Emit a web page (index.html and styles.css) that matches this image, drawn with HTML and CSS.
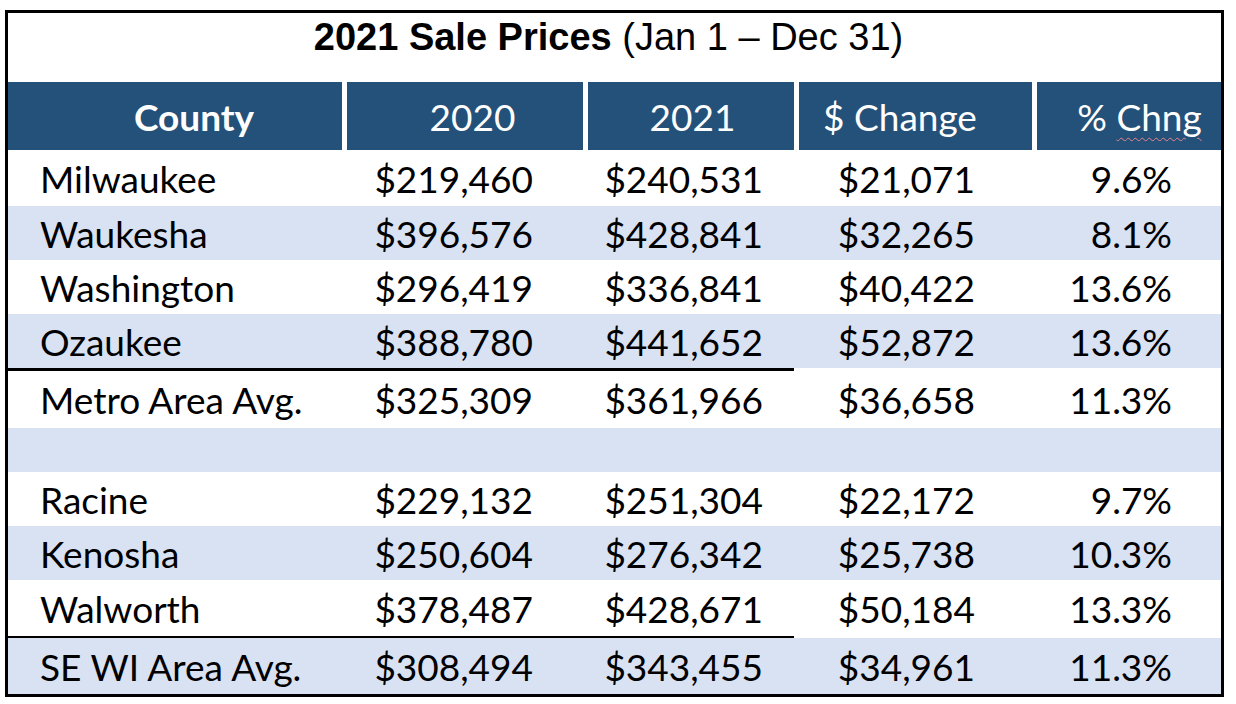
FILE: index.html
```html
<!DOCTYPE html>
<html lang="en">
<head>
<meta charset="utf-8">
<title>2021 Sale Prices</title>
<link rel="stylesheet" href="styles.css">
</head>
<body>
<div class="sheet">
  <div class="title"><b>2021 Sale Prices</b> (Jan 1 – Dec 31)</div>
  <div class="row head">
    <div class="th th1"><b>County</b></div>
    <div class="th th2">2020</div>
    <div class="th th3">2021</div>
    <div class="th th4">$ Change</div>
    <div class="th th5"><span>% <span class="spell">Chng</span></span></div>
  </div>
  <div class="row r56">
    <div class="c c1">Milwaukee</div><div class="c c2">$219,460</div><div class="c c3">$240,531</div><div class="c c4">$21,071</div><div class="c c5">9.6%</div>
  </div>
  <div class="row band">
    <div class="c c1">Waukesha</div><div class="c c2">$396,576</div><div class="c c3">$428,841</div><div class="c c4">$32,265</div><div class="c c5">8.1%</div>
  </div>
  <div class="row">
    <div class="c c1">Washington</div><div class="c c2">$296,419</div><div class="c c3">$336,841</div><div class="c c4">$40,422</div><div class="c c5">13.6%</div>
  </div>
  <div class="row band rule r57">
    <div class="c c1">Ozaukee</div><div class="c c2">$388,780</div><div class="c c3">$441,652</div><div class="c c4">$52,872</div><div class="c c5">13.6%</div>
  </div>
  <div class="row r57">
    <div class="c c1">Metro Area Avg.</div><div class="c c2">$325,309</div><div class="c c3">$361,966</div><div class="c c4">$36,658</div><div class="c c5">11.3%</div>
  </div>
  <div class="row band blank">
    <div class="c c1"></div><div class="c c2"></div><div class="c c3"></div><div class="c c4"></div><div class="c c5"></div>
  </div>
  <div class="row">
    <div class="c c1">Racine</div><div class="c c2">$229,132</div><div class="c c3">$251,304</div><div class="c c4">$22,172</div><div class="c c5">9.7%</div>
  </div>
  <div class="row band">
    <div class="c c1">Kenosha</div><div class="c c2">$250,604</div><div class="c c3">$276,342</div><div class="c c4">$25,738</div><div class="c c5">10.3%</div>
  </div>
  <div class="row rule r58">
    <div class="c c1">Walworth</div><div class="c c2">$378,487</div><div class="c c3">$428,671</div><div class="c c4">$50,184</div><div class="c c5">13.3%</div>
  </div>
  <div class="row band r56">
    <div class="c c1">SE WI Area Avg.</div><div class="c c2">$308,494</div><div class="c c3">$343,455</div><div class="c c4">$34,961</div><div class="c c5">11.3%</div>
  </div>
</div>
</body>
</html>
```
FILE: styles.css
```css
* { box-sizing: border-box; }
html, body { margin: 0; padding: 0; background: #fff; }

.sheet {
  margin: 10px 0 0 5px;
  width: 1219px;
  border: 3px solid #000;
  background: #fff;
  color: #000;
}

.title {
  height: 69px;
  padding-top: 5px;
  padding-right: 12px;
  text-align: center;
  font-family: "Liberation Sans", Arial, sans-serif;
  font-size: 38px;
  line-height: 38px;
}
.title b { font-weight: 700; }

.row {
  display: grid;
  grid-template-columns: 334px 241px 211px 238px 189px;
  height: 54px;
  font-family: Lato, "Noto Sans", sans-serif;
  font-size: 37px;
}
.row.r56 { height: 56px; }
.row.r57 { height: 57px; }
.row.r58 { height: 58px; }
.row.blank { height: 44px; }

.head { height: 68px; }
.th {
  background: #245179;
  color: #fff;
  display: flex;
  align-items: center;
  justify-content: center;
}
.th + .th { border-left: 5px solid #fff; }
.th1 { padding-left: 38px; }
.th1 b { font-weight: 700; }
.th2 { padding-left: 15px; }
.th3 { padding-left: 3px; }
.th4 { padding-right: 31px; }
.th5 { padding-left: 21px; }
.spell {
  text-decoration: underline wavy #e8858a;
  text-decoration-thickness: 1px;
  text-underline-offset: 6px;
}

.c {
  display: flex;
  align-items: center;
  justify-content: flex-end;
  white-space: nowrap;
  background-clip: padding-box;
}
.band .c { background-color: #d9e2f3; }
.c1 { justify-content: flex-start; padding-left: 32px; }
.c2 { padding-right: 50px; }
.c3 { padding-right: 31px; }
.c4 { padding-right: 57px; }
.c5 { padding-right: 49px; }

.rule .c { border-bottom: 3px solid transparent; }
.rule .c1, .rule .c2, .rule .c3 { border-bottom-color: #000; }
.r58.rule .c { border-bottom-width: 2px; }
```
